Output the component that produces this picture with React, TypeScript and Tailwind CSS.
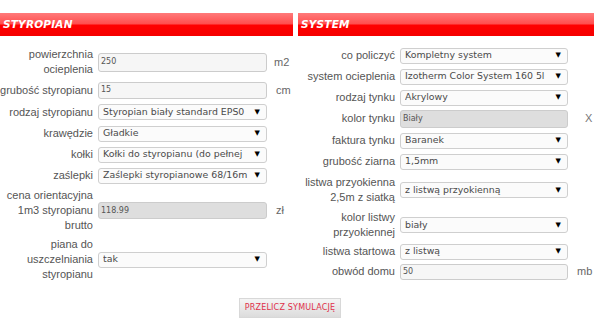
import type { ReactNode } from 'react'

const font = { fontFamily: '"Liberation Sans", Arial, sans-serif' }
const ctrlFont = { fontFamily: '"DejaVu Sans", Verdana, sans-serif' }

function Header({ title }: { title: string }) {
  return (
    <div className="h-[23px] flex items-center pl-[3px] bg-[linear-gradient(to_bottom,#ff7a7a_0%,#ff4d4d_48%,#ff0000_52%,#f50000_100%)]">
      <span
        className="text-white text-[10.5px] font-bold italic tracking-[0.2px]"
        style={ctrlFont}
      >
        {title}
      </span>
    </div>
  )
}

function Select({ value }: { value: string }) {
  return (
    <div
      className="h-[16px] w-full flex items-center border border-[#cfcfcf] rounded-[3px] bg-[#fbfbfb] pl-[4px] pr-[6px] text-[9.4px] text-[#4a4a4a]"
      style={ctrlFont}
    >
      <span className="flex-1 min-w-0 whitespace-nowrap overflow-hidden">{value}</span>
      <span className="text-[7px] text-black ml-[4px] shrink-0">▼</span>
    </div>
  )
}

function TextInput({ value, gray, h = 'h-[18px]' }: { value: string; gray?: boolean; h?: string }) {
  return (
    <div
      className={`${h} w-full flex items-center border border-[#cccccc] rounded-[3px] pl-[2px] text-[8px] text-[#555] ${
        gray ? 'bg-[#dedede]' : 'bg-[#f6f6f6]'
      }`}
      style={ctrlFont}
    >
      {value}
    </div>
  )
}

function Row({
  label,
  children,
  unit,
  cls,
  labelW,
  ctrlW,
  unitCls = 'ml-[7px]',
}: {
  label: ReactNode
  children: ReactNode
  unit?: string
  cls: string
  labelW: string
  ctrlW: string
  unitCls?: string
}) {
  return (
    <div className={`flex items-center ${cls}`}>
      <div className={`${labelW} text-right text-[11px] leading-[15px] text-[#555]`} style={font}>
        {label}
      </div>
      <div className={`${ctrlW} ml-[5px]`}>{children}</div>
      {unit && (
        <span className={`${unitCls} text-[11px] text-[#666]`} style={font}>
          {unit}
        </span>
      )}
    </div>
  )
}

export default function App() {
  const L = { labelW: 'w-[93px] shrink-0', ctrlW: 'w-[169px] shrink-0' }
  const R = { labelW: 'w-[97px] shrink-0', ctrlW: 'w-[168px] shrink-0' }
  return (
    <div className="w-[600px] h-[330px] bg-white overflow-hidden relative">
      <div className="flex pt-[13px]">
        {/* Styropian */}
        <div className="w-[293px] shrink-0">
          <Header title="STYROPIAN" />
          <div className="pt-[11px]">
            <Row {...L} cls="h-[30px]" unit="m2" label={<>powierzchnia<br />ocieplenia</>}>
              <TextInput value="250" h="h-[19px]" />
            </Row>
            <Row {...L} cls="h-[22px] mt-[2px]" unit="cm" unitCls="ml-[9px]" label="grubość styropianu">
              <TextInput value="15" h="h-[17px]" />
            </Row>
            <Row {...L} cls="h-[22px]" label="rodzaj styropianu">
              <Select value="Styropian biały standard EPS0" />
            </Row>
            <Row {...L} cls="h-[21px]" label="krawędzie">
              <Select value="Gładkie" />
            </Row>
            <Row {...L} cls="h-[21px]" label="kołki">
              <Select value="Kołki do styropianu (do pełnej" />
            </Row>
            <Row {...L} cls="h-[21px]" label="zaślepki">
              <Select value="Zaślepki styropianowe 68/16m" />
            </Row>
            <Row {...L} cls="h-[45px] mt-[2px]" unit="zł" unitCls="ml-[9px]" label={<>cena orientacyjna<br />1m3 styropianu<br />brutto</>}>
              <TextInput value="118.99" gray h="h-[17px]" />
            </Row>
            <Row {...L} cls="h-[45px] mt-[4px]" label={<>piana do<br />uszczelniania<br />styropianu</>}>
              <Select value="tak" />
            </Row>
          </div>
        </div>

        <div className="w-[5px] shrink-0" />

        {/* System */}
        <div className="w-[296px] shrink-0">
          <Header title="SYSTEM" />
          <div className="pt-[9px]">
            <Row {...R} cls="h-[21px]" label="co policzyć">
              <Select value="Kompletny system" />
            </Row>
            <Row {...R} cls="h-[21px]" label="system ocieplenia">
              <Select value="Izotherm Color System 160 5l" />
            </Row>
            <Row {...R} cls="h-[21px]" label="rodzaj tynku">
              <Select value="Akrylowy" />
            </Row>
            <Row {...R} cls="h-[21px]" unit="X" unitCls="ml-[17px] text-[#777]" label="kolor tynku">
              <TextInput value="Biały" gray h="h-[18px]" />
            </Row>
            <Row {...R} cls="h-[21px] mt-[1px]" label="faktura tynku">
              <Select value="Baranek" />
            </Row>
            <Row {...R} cls="h-[21px]" label="grubość ziarna">
              <Select value="1,5mm" />
            </Row>
            <Row {...R} cls="h-[30px] mt-[3px]" label={<>listwa przyokienna<br />2,5m z siatką</>}>
              <Select value="z listwą przyokienną" />
            </Row>
            <Row {...R} cls="h-[30px] mt-[5px]" label={<>kolor listwy<br />przyokiennej</>}>
              <Select value="biały" />
            </Row>
            <Row {...R} cls="h-[21px] mt-[1px]" label="listwa startowa">
              <Select value="z listwą" />
            </Row>
            <Row {...R} cls="h-[19px]" unit="mb" unitCls="ml-[9px]" label="obwód domu">
              <TextInput value="50" h="h-[16px]" />
            </Row>
          </div>
        </div>
      </div>

      <div className="flex pl-[239px] mt-[16px]">
        <div
          className="w-[102px] h-[20px] flex items-center justify-center border border-[#d8d8d8] bg-[linear-gradient(to_bottom,#f4f4f4,#dcdcdc)] text-[8px] text-[#e0304a] tracking-[0.2px]"
          style={ctrlFont}
        >
          PRZELICZ SYMULACJĘ
        </div>
      </div>
    </div>
  )
}
